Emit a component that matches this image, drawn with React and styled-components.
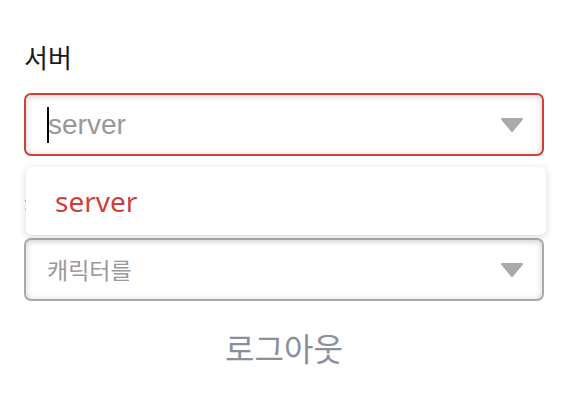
import styled, { createGlobalStyle } from 'styled-components'

const GlobalStyle = createGlobalStyle`
  body {
    margin: 0;
    background: #fff;
    font-family: "Noto Sans CJK KR", "Noto Sans", sans-serif;
  }
`

function Caret(props) {
  return (
    <Arrow width="24" height="16" viewBox="0 0 24 16">
      <polygon points="2,2 22,2 12,14" fill="#aaa" stroke="#aaa" strokeWidth="2" strokeLinejoin="round"/>
    </Arrow>
  )
}

function App() {
  return (
    <>
      <GlobalStyle/>
      <Page>
        <Field>
          <Label>서버</Label>
          <SelectBox $focused>
            <Cursor/>
            <Placeholder $focused>server</Placeholder>
            <Caret/>
          </SelectBox>
          <Menu>
            <Option>server</Option>
          </Menu>
        </Field>
        <Field>
          <Label>캐릭터</Label>
          <SelectBox>
            <Placeholder>캐릭터를</Placeholder>
            <Caret/>
          </SelectBox>
        </Field>
        <Logout>로그아웃</Logout>
      </Page>
    </>
  )
}

const Page = styled.div`
  width: 520px;
  margin-left: 24px;
  padding-top: 41px;
  display: flex;
  flex-direction: column;
  gap: 30px;
`

const Field = styled.div`
  position: relative;
  display: flex;
  flex-direction: column;
  gap: 20px;
`

const Label = styled.div`
  font-size: 26px;
  line-height: 32px;
  color: #1a1a1a;
`

const SelectBox = styled.div`
  box-sizing: border-box;
  height: 63px;
  display: flex;
  align-items: center;
  padding: 0 18px 0 21px;
  border: 2px solid ${p => p.$focused ? '#d0403a' : '#aaa'};
  border-radius: 7px;
  background: #fff;
  box-shadow: inset 0 1px 7px rgba(0, 0, 0, 0.18);
`

const Cursor = styled.span`
  width: 2px;
  height: 36px;
  background: #000;
  margin-right: -1px;
`

const Placeholder = styled.span`
  flex: 1;
  color: #999;
  font-family: ${p => p.$focused ? '"Liberation Sans", Arial, sans-serif' : '"Noto Sans CJK KR", sans-serif'};
  font-size: ${p => p.$focused ? '28px' : '23px'};
  line-height: 1;
`

const Arrow = styled.svg`
  display: block;
  flex: none;
`

const Menu = styled.div`
  position: absolute;
  left: 2px;
  top: 126px;
  width: 520px;
  height: 68px;
  box-sizing: border-box;
  display: flex;
  align-items: center;
  padding-left: 29px;
  background: #fff;
  border-radius: 6px;
  box-shadow: 0 2px 8px rgba(0, 0, 0, 0.16);
  z-index: 2;
`

const Option = styled.div`
  font-family: "Noto Sans", sans-serif;
  font-size: 28px;
  color: #d0403a;
`

const Logout = styled.div`
  text-align: center;
  font-size: 32px;
  line-height: 44px;
  color: #8a8f9c;
  margin-top: -6px;
`

export default App
